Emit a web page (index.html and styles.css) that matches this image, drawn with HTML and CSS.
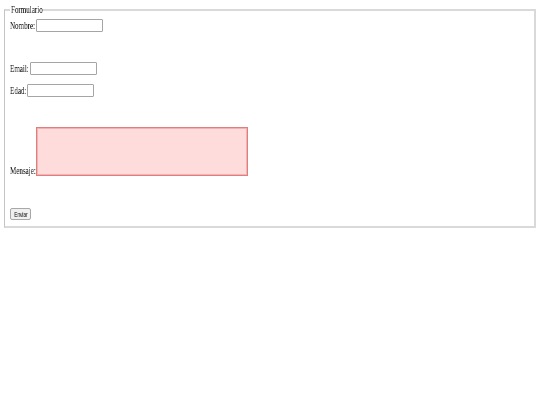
FILE: index.html
```html
<!DOCTYPE html>
<html lang="es">
<head>
<meta charset="utf-8">
<title>Formulario</title>
<link rel="stylesheet" href="styles.css">
</head>
<body>
<form class="contact">
  <fieldset class="contact__box">
    <legend class="contact__legend"><span class="squeeze">Formulario</span></legend>
    <div class="field">
      <label class="field__label field__label--nombre" for="nombre"><span class="squeeze">Nombre:</span></label>
      <input class="field__input" id="nombre" name="nombre" type="text">
    </div>
    <div class="field field--far">
      <label class="field__label field__label--email" for="email"><span class="squeeze">Email:</span></label>
      <input class="field__input" id="email" name="email" type="email">
    </div>
    <div class="field field--near">
      <label class="field__label field__label--edad" for="edad"><span class="squeeze">Edad:</span></label>
      <input class="field__input" id="edad" name="edad" type="text">
    </div>
    <div class="field field--far field--bottom">
      <label class="field__label field__label--mensaje" for="mensaje"><span class="squeeze">Mensaje:</span></label>
      <textarea class="field__textarea" id="mensaje" name="mensaje"></textarea>
    </div>
    <div class="field field--submit">
      <button class="submit" type="submit"><span class="squeeze squeeze--center">Enviar</span></button>
    </div>
  </fieldset>
</form>
</body>
</html>
```
FILE: styles.css
```css
html, body {
  margin: 0;
  background: #ffffff;
}

body {
  padding: 4px;
  font-family: "Liberation Serif", "Times New Roman", serif;
  font-size: 10.5px;
  color: #000000;
}

.squeeze {
  display: inline-block;
  white-space: nowrap;
  color: #000000;
  transform: scaleX(0.67);
  transform-origin: left center;
  will-change: transform;
}

.squeeze--center {
  transform-origin: center center;
}

.contact {
  margin: 0;
}

.contact__box {
  margin: 0;
  padding: 3px 4px 6px 5px;
  border: 2px solid #d9d9d9;
  border-left: 1px solid #c4c4c4;
  min-width: 0;
}

.contact__legend {
  width: 30px;
  padding: 0 1px;
  color: #000000;
  line-height: 12px;
  overflow: visible;
  white-space: nowrap;
}

.field {
  display: flex;
  align-items: center;
}

.field--near {
  margin-top: 9px;
}

.field--far {
  margin-top: 30px;
}

.field--bottom {
  align-items: flex-end;
}

.field--submit {
  margin-top: 32px;
}

.field__label {
  flex: none;
  line-height: 12px;
  white-space: nowrap;
}

.field--bottom .field__label {
  line-height: 10px;
}

.field__label--nombre { width: 26px; }
.field__label--email { width: 20px; }
.field__label--edad { width: 17px; }
.field__label--mensaje { width: 26px; }

.field__input {
  box-sizing: border-box;
  width: 67px;
  height: 13px;
  margin: 0;
  padding: 0 2px;
  border: 1px solid #a5a5a5;
  border-radius: 1px;
  background: #ffffff;
  font-size: 8px;
}

.field__textarea {
  box-sizing: border-box;
  width: 212px;
  height: 49px;
  margin: 0;
  padding: 1px;
  border: 1px solid #e07e7e;
  box-shadow: inset 0 0 0 1px #f4b3b3;
  background: #ffdcdc;
  font-size: 8px;
}

.field__textarea::-webkit-resizer {
  background: transparent;
}

.submit {
  box-sizing: border-box;
  width: 21px;
  height: 12px;
  margin: 0;
  padding: 0;
  border: 1px solid #a8a8a8;
  border-radius: 2px;
  background: #f0f0f0;
  color: #000000;
  font-family: "Liberation Sans", Arial, sans-serif;
  font-size: 7px;
  line-height: 9px;
  text-align: center;
}
```
